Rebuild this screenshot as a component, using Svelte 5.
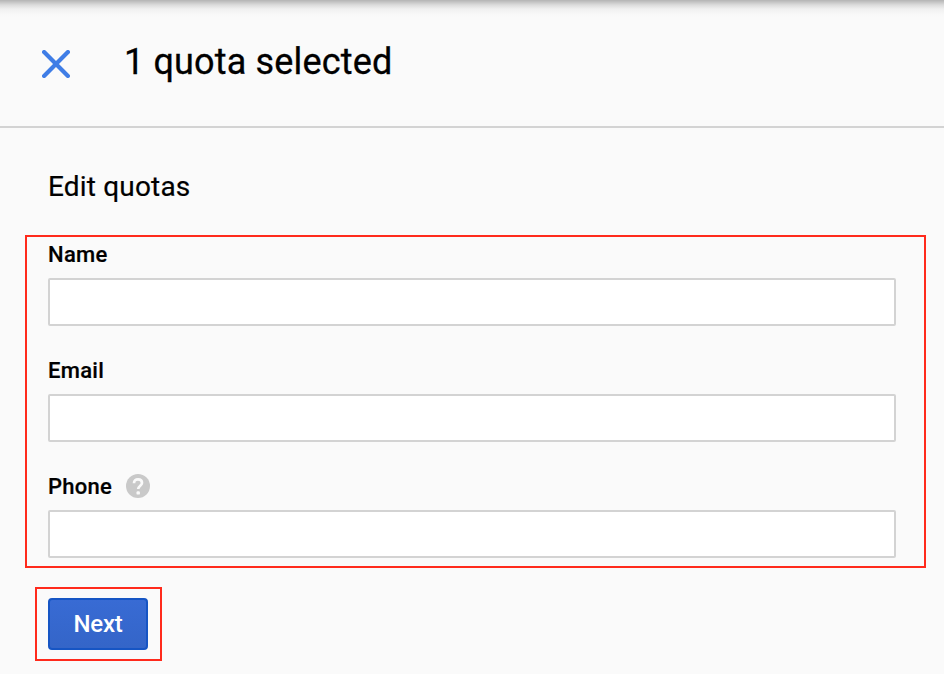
<script>
  const fields = [
    { id: 'name', label: 'Name' },
    { id: 'email', label: 'Email' },
    { id: 'phone', label: 'Phone', help: true }
  ];
</script>

<main>
  <header>
    <button class="close" aria-label="Close">
      <svg width="28" height="28" viewBox="0 0 28 28"><path d="M2.100 2.100L25.900 25.900M25.900 2.100L2.100 25.900" /></svg>
    </button>
    <h1>1 quota selected</h1>
  </header>
  <h2>Edit quotas</h2>
  <form>
    <section class="fields">
      {#each fields as f}
        <div class="field">
          <div class="label">
            <label for={f.id}>{f.label}</label>
            {#if f.help}
              <svg class="help" width="24" height="24" viewBox="0 0 24 24">
                <circle cx="12" cy="12" r="12" />
                <path d="M8 9.200C8 6.600 9.700 5.400 12 5.400s4 1.400 4 3.500c0 2.600-3.800 3-3.800 6.200" />
                <rect x="10.500" y="17.200" width="3.400" height="3.400" rx="1.200" />
              </svg>
            {/if}
          </div>
          <input id={f.id} type="text" />
        </div>
      {/each}
    </section>
    <div class="action"><button class="next" type="button">Next</button></div>
  </form>
</main>

<style>
  :global(body) { background: #fafafa; }
  main {
    box-sizing: border-box;
    height: 674px;
    overflow: hidden;
    font-family: Roboto, sans-serif;
    color: #000;
    background: linear-gradient(#b4b4b4, #c4c4c4 2px, #dcdcdc 5px, #f0f0f0 9px, #f8f8f8 14px, #fafafa 18px);
  }
  header {
    box-sizing: border-box;
    height: 128px;
    display: flex;
    align-items: flex-start;
    border-bottom: 2px solid #d3d3d3;
    padding-left: 42px;
  }
  .close { display: block; margin: 50px 54px 0 0; padding: 0; border: 0; background: none; line-height: 0; }
  .close path { stroke: #3f7de6; stroke-width: 4.2; stroke-linecap: round; fill: none; }
  h1 { margin: 40px 0 0; font-size: 36px; line-height: 44px; font-weight: 400; letter-spacing: 0.16px; white-space: nowrap; -webkit-text-stroke: 0.3px #000; }
  h2 { margin: 43px 0 0 48px; font-size: 28px; line-height: 32px; font-weight: 400; letter-spacing: 0.18px; -webkit-text-stroke: 0.2px #000; }
  .fields {
    box-sizing: border-box;
    width: 901px;
    height: 333px;
    margin: 32px 0 0 25px;
    padding: 5px 0 0 21px;
    border: 2px solid #ff2a1c;
  }
  .field { height: 116px; }
  .label { height: 36px; display: flex; align-items: flex-start; }
  label { font-size: 22px; line-height: 26px; font-weight: 500; letter-spacing: 0.28px; -webkit-text-stroke: 0.2px #000; }
  .help { margin: 0 0 0 14px; }
  .help circle { fill: #c9c9c9; }
  .help path { fill: none; stroke: #fafafa; stroke-width: 2.7; }
  .help rect { fill: #fafafa; }
  input {
    display: block;
    box-sizing: border-box;
    width: 848px;
    height: 48px;
    border: 2px solid #d3d3d3;
    border-radius: 2px;
    background: #fff;
    padding: 0 12px;
    font: 22px Roboto, sans-serif;
  }
  .action {
    box-sizing: border-box;
    width: 127px;
    height: 74px;
    margin: 19px 0 0 35px;
    padding: 9px 0 0 11px;
    border: 2px solid #ff2a1c;
  }
  .next {
    display: block;
    box-sizing: border-box;
    width: 100px;
    height: 52px;
    padding: 0;
    border: 2px solid #1655c4;
    border-radius: 4px;
    background: linear-gradient(#386bd4, #3465c8);
    color: #fff;
    font: 500 24px Roboto, sans-serif;
    letter-spacing: -0.2px;
  }
</style>
